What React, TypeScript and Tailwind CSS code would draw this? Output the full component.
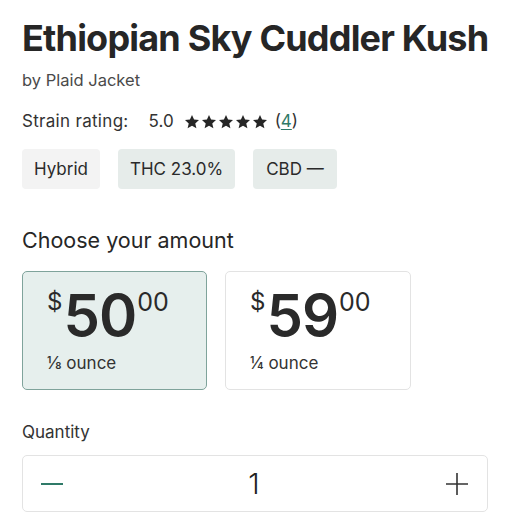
const stars = [0, 1, 2, 3, 4]

function StarIcon() {
  return (
    <svg width="16" height="16" viewBox="0 0 24 24" className="text-[#262626]">
      <path
        d="M12 1.5l3.1 6.9 7.4.7-5.6 5 1.7 7.4L12 17.6l-6.6 3.9 1.7-7.4-5.6-5 7.4-.7z"
        fill="currentColor"
      />
    </svg>
  )
}

function PriceCard({
  dollars,
  label,
  selected,
}: {
  dollars: string
  label: string
  selected?: boolean
}) {
  return (
    <div
      className={
        selected
          ? 'w-[185px] h-[119px] rounded-[5px] border border-[#7fa39b] bg-[#e6efed] pl-[24px] pt-[14px]'
          : 'w-[186px] h-[119px] rounded-[5px] border border-[#e3e3e3] bg-white pl-[24px] pt-[14px]'
      }
    >
      <div className="flex items-start text-[#2a2a2a] leading-none">
        <span className="text-[24px] mt-[4px] mr-[1px]">$</span>
        <span className="text-[58px] font-semibold tracking-[-1px]">{dollars}</span>
        <span className="text-[25px] mt-[4px] ml-[1px]">00</span>
      </div>
      <div className="mt-[7px] text-[17px] text-[#333]">{label}</div>
    </div>
  )
}

export default function App() {
  return (
    <div className="w-[510px] h-[530px] bg-white px-[22px] pt-[12px] text-[#2a2a2a] font-['Inter',sans-serif]">
      {/* Title block */}
      <h1 className="whitespace-nowrap text-[36px] font-bold leading-[52px] tracking-[-0.8px] text-[#262626]">
        Ethiopian Sky Cuddler Kush
      </h1>
      <div className="mt-[4px] text-[16.5px] text-[#4a4a4a]">by Plaid Jacket</div>

      {/* Rating */}
      <div className="mt-[16px] flex items-center text-[17px] text-[#333]">
        <span className="tracking-[0.3px]">Strain rating:</span>
        <span className="ml-[20px]">5.0</span>
        <span className="ml-[10px] flex gap-[1px]">
          {stars.map((i) => (
            <StarIcon key={i} />
          ))}
        </span>
        <span className="ml-[7px]">
          (<span className="text-[#2f7a68] underline underline-offset-2">4</span>)
        </span>
      </div>

      {/* Chips */}
      <div className="mt-[15px] flex gap-[18px] text-[17px] text-[#2a2a2a]">
        <span className="h-[40px] px-[12px] flex items-center rounded-[4px] bg-[#f3f3f3]">Hybrid</span>
        <span className="h-[40px] px-[12px] flex items-center rounded-[4px] bg-[#e6ecea]">THC 23.0%</span>
        <span className="h-[40px] px-[13px] flex items-center rounded-[4px] bg-[#e6ecea]">CBD —</span>
      </div>

      {/* Amount */}
      <div className="mt-[35px] text-[21.5px] text-[#262626]">Choose your amount</div>
      <div className="mt-[14px] flex gap-[18px]">
        <PriceCard dollars="50" label="⅛ ounce" selected />
        <PriceCard dollars="59" label="¼ ounce" />
      </div>

      {/* Quantity */}
      <div className="mt-[30px] text-[17px] text-[#333]">Quantity</div>
      <div className="mt-[10px] w-[466px] h-[57px] rounded-[5px] border border-[#e3e3e3] flex items-center justify-between px-[18px]">
        <span className="w-[22px] h-[2px] bg-[#2f7a68]" />
        <span className="text-[29px] font-light text-[#222]">1</span>
        <svg width="24" height="24" viewBox="0 0 24 24" className="text-[#333]">
          <path d="M12 1v22M1 12h22" stroke="currentColor" strokeWidth="1.6" />
        </svg>
      </div>
    </div>
  )
}
